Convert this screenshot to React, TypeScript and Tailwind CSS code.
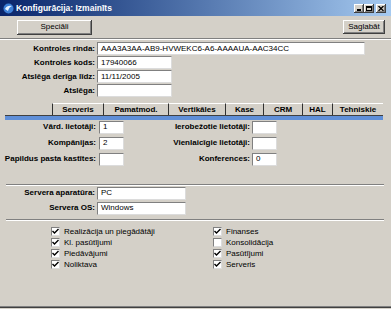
import React from "react";

const raised =
  "bg-[#d4d0c8] shadow-[inset_-1px_-1px_0_#404040,inset_1px_1px_0_#ffffff,inset_-2px_-2px_0_#808080]";
const sunken = "bg-white border border-t-[#808080] border-l-[#808080] border-b-[#dcdcdc] border-r-[#dcdcdc]";

const Field = ({ w, value }: { w: string; value?: string }) => (
  <div className={`${sunken} ${w} h-[13px] flex items-center pl-[3px] leading-none overflow-hidden whitespace-nowrap`}>
    {value}
  </div>
);

const Separator = ({ className = "" }: { className?: string }) => (
  <div className={`mx-[6px] w-[378px] h-[2px] border-t border-[#808080] border-b border-b-white ${className}`} />
);

const Check = ({ checked, label }: { checked: boolean; label: string }) => (
  <div className="flex items-center h-[11px] gap-[4px]">
    <div className={`${sunken} w-[9px] h-[9px] flex items-center justify-center`}>
      {checked && (
        <svg width="7" height="7" viewBox="0 0 7 7">
          <path d="M0.5 3 L2.5 5 L6.5 1" stroke="#000" strokeWidth="1.4" fill="none" />
        </svg>
      )}
    </div>
    <span className="leading-none">{label}</span>
  </div>
);

const tabs = [
  { name: "Serveris", w: "w-[51px]" },
  { name: "Pamatmod.", w: "w-[65px]" },
  { name: "Vertikāles", w: "w-[57px]" },
  { name: "Kase", w: "w-[38px]" },
  { name: "CRM", w: "w-[39px]" },
  { name: "HAL", w: "w-[30px]" },
  { name: "Tehniskie", w: "w-[51px]" },
];

const TitleButton = ({ children }: { children: React.ReactNode }) => (
  <div className={`${raised} w-[10px] h-[9px] flex items-center justify-center`}>{children}</div>
);

export default function App() {
  return (
    <div className="w-[391px] h-[309px] bg-[#d4d0c8] flex flex-col font-['Liberation_Sans',Arial,sans-serif] text-[8px] text-black overflow-hidden">
      {/* title bar */}
      <div className="h-[16px] bg-gradient-to-r from-[#0a246a] to-[#a6caf0] flex items-center pl-[3px] pr-[5px]">
        <svg width="11" height="11" viewBox="0 0 11 11">
          <circle cx="5.5" cy="5.5" r="5" fill="#3d7fd6" />
          <path d="M2 6 Q4 2 9 3 Q6 4 5 8 Z" fill="#e8f2ff" />
        </svg>
        <span className="ml-[2px] text-white font-bold text-[8.5px] leading-none">Konfigurācija: Izmainīts</span>
        <div className="ml-auto flex items-center">
          <TitleButton>
            <div className="w-[4px] h-[1.5px] bg-black mt-[4px]" />
          </TitleButton>
          <TitleButton>
            <div className="w-[6px] h-[5px] border border-black border-t-2" />
          </TitleButton>
          <div className="ml-[2px]">
            <TitleButton>
              <svg width="6" height="5" viewBox="0 0 6 5">
                <path d="M0.5 0 L5.5 5 M5.5 0 L0.5 5" stroke="#000" strokeWidth="1.3" />
              </svg>
            </TitleButton>
          </div>
        </div>
      </div>

      {/* toolbar */}
      <div className="h-[22px] flex items-center pl-[17px] pr-[6px]">
        <button className={`${raised} w-[75px] h-[15px] leading-none`}>Speciāli</button>
        <button className={`${raised} ml-auto w-[42px] h-[14px] leading-none`}>Saglabāt</button>
      </div>
      <div className="h-[2px] border-t border-[#808080] border-b border-b-white" />

      {/* header form */}
      <div className="mt-[2px] flex flex-col gap-[1px]">
        {[
          { label: "Kontroles rinda:", value: "AAA3A3AA-AB9-HVWEKC6-A6-AAAAUA-AAC34CC", w: "w-[268px]" },
          { label: "Kontroles kods:", value: "17940066", w: "w-[75px]" },
          { label: "Atslēga derīga līdz:", value: "11/11/2005", w: "w-[75px]" },
          { label: "Atslēga:", value: "", w: "w-[75px]" },
        ].map((r) => (
          <div key={r.label} className="flex items-center h-[13px]">
            <span className="w-[97px] text-right pr-[2px] font-bold leading-none">{r.label}</span>
            <Field w={r.w} value={r.value} />
          </div>
        ))}
      </div>

      {/* tabs */}
      <div className="mt-[6px] flex h-[12px] pl-[52px]">
        {tabs.map((t) => (
          <div
            key={t.name}
            className={`${t.w} h-[12px] border-l border-l-[#303030] border-t border-t-white flex items-center justify-center font-bold leading-none`}
          >
            {t.name}
          </div>
        ))}
      </div>
      <div className="mx-[5px] w-[378px] h-[5px] border-t border-[#404040] bg-[#5f8fd8]" />

      {/* tab content */}
      <div className="mt-[1px] flex flex-col gap-[4px]">
        {[
          { l: "Vārd. lietotāji:", lv: "1", r: "Ierobežotie lietotāji:", rv: "" },
          { l: "Kompānijas:", lv: "2", r: "Vienlaicīgie lietotāji:", rv: "" },
          { l: "Papildus pasta kastītes:", lv: "", r: "Konferences:", rv: "0" },
        ].map((r) => (
          <div key={r.l} className="flex items-center h-[12px]">
            <span className="w-[99px] text-right pr-[3px] font-bold leading-none whitespace-nowrap">{r.l}</span>
            <Field w="w-[25px]" value={r.lv} />
            <span className="w-[128px] text-right pr-[2px] font-bold leading-none whitespace-nowrap">{r.r}</span>
            <Field w="w-[25px]" value={r.rv} />
          </div>
        ))}
      </div>

      <Separator className="mt-[19px]" />

      <div className="mt-[1px] flex flex-col gap-[3px]">
        {[
          { label: "Servera aparatūra:", value: "PC" },
          { label: "Servera OS:", value: "Windows" },
        ].map((r) => (
          <div key={r.label} className="flex items-center h-[12px]">
            <span className="w-[97px] text-right pr-[2px] font-bold leading-none">{r.label}</span>
            <Field w="w-[89px]" value={r.value} />
          </div>
        ))}
      </div>

      <Separator className="mt-[5px]" />

      <div className="mt-[5px] flex pl-[51px]">
        <div className="w-[162px] flex flex-col">
          <Check checked label="Realizācija un piegādātāji" />
          <Check checked label="Kl. pasūtījumi" />
          <Check checked label="Piedāvājumi" />
          <Check checked label="Noliktava" />
        </div>
        <div className="flex flex-col">
          <Check checked label="Finanses" />
          <Check checked={false} label="Konsolidācija" />
          <Check checked label="Pasūtījumi" />
          <Check checked label="Serveris" />
        </div>
      </div>

      <div className="mt-auto h-[2px] border-t border-[#808080] border-b border-b-[#404040] mb-[1px]" />
    </div>
  );
}
